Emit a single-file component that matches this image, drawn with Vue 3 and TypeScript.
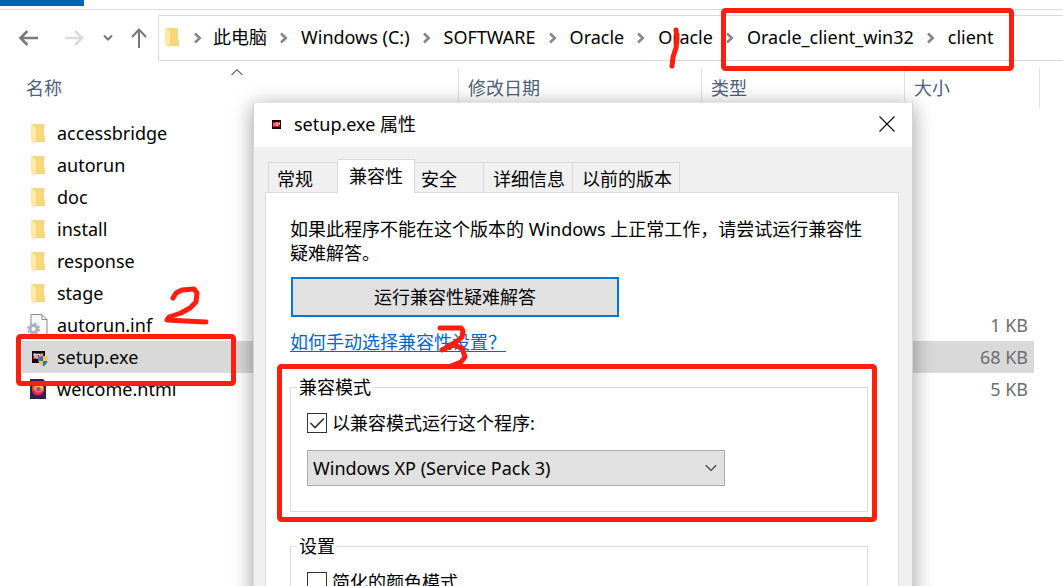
<script setup lang="ts">
import { ref } from 'vue'

type Kind = 'folder' | 'inf' | 'setup' | 'html'
interface FileRow {
  name: string
  kind: Kind
  size?: string
}

const crumbs: string[] = ['此电脑', 'Windows (C:)', 'SOFTWARE', 'Oracle', 'Oracle', 'Oracle_client_win32', 'client']
const files: FileRow[] = [
  { name: 'accessbridge', kind: 'folder' },
  { name: 'autorun', kind: 'folder' },
  { name: 'doc', kind: 'folder' },
  { name: 'install', kind: 'folder' },
  { name: 'response', kind: 'folder' },
  { name: 'stage', kind: 'folder' },
  { name: 'autorun.inf', kind: 'inf', size: '1 KB' },
  { name: 'setup.exe', kind: 'setup', size: '68 KB' },
  { name: 'welcome.html', kind: 'html', size: '5 KB' },
]
const tabs: string[] = ['常规', '兼容性', '安全', '详细信息', '以前的版本']
const selectedFile = ref('setup.exe')
const activeTab = ref('兼容性')
const compatOn = ref(true)
const reducedColor = ref(false)
const mode = ref('Windows XP (Service Pack 3)')
</script>

<template>
  <main class="screen">
    <div class="ribbon"><span class="ribbon-tab"></span></div>

    <nav class="nav">
      <button class="nav-btn back" aria-label="Back">
        <svg width="20" height="20" viewBox="0 0 20 20"><path d="M20 10H2.500M9.500 3l-7 7 7 7" fill="none" stroke="#7a7a7a" stroke-width="2.6" /></svg>
      </button>
      <button class="nav-btn forward" aria-label="Forward">
        <svg width="20" height="20" viewBox="0 0 20 20"><path d="M1 10h17M11 3l7 7-7 7" fill="none" stroke="#dcdcdc" stroke-width="2.6" /></svg>
      </button>
      <button class="nav-btn recent" aria-label="Recent">
        <svg width="10" height="8" viewBox="0 0 10 8"><path d="M1 1.5l4 4 4-4" fill="none" stroke="#777" stroke-width="2" /></svg>
      </button>
      <button class="nav-btn up" aria-label="Up">
        <svg width="18" height="20" viewBox="0 0 18 20"><path d="M9 20V2M2 9l7-7.500 7 7.500" fill="none" stroke="#777" stroke-width="2" /></svg>
      </button>
      <div class="address">
        <svg class="folder" width="14" height="22" viewBox="0 0 14 22">
          <path d="M0 1h13v11l1 1v6H4z" fill="#f6d77a" />
          <path d="M0 1l5 3v13l-1 4-4-3z" fill="#ffe9a6" />
        </svg>
        <template v-for="(c, i) in crumbs" :key="i">
          <svg class="sep" width="8" height="12" viewBox="0 0 8 12"><path d="M1 1.500L5.800 6 1 10.500" fill="none" stroke="#858585" stroke-width="2.500" /></svg>
          <button class="crumb">{{ c }}</button>
        </template>
      </div>
    </nav>

    <table class="files">
      <colgroup><col /><col class="c-date" /><col class="c-type" /><col class="c-size" /></colgroup>
      <thead>
        <tr>
          <th class="first">名称
            <svg class="caret" width="12" height="7" viewBox="0 0 12 7"><path d="M.5 6L6 .8 11.500 6" fill="none" stroke="#666" stroke-width="1.100" /></svg>
          </th>
          <th>修改日期</th>
          <th>类型</th>
          <th>大小</th>
        </tr>
      </thead>
      <tbody>
        <tr v-for="f in files" :key="f.name" :class="{ selected: f.name === selectedFile }" @click="selectedFile = f.name">
          <td>
            <div class="name">
              <span class="icon">
                <svg v-if="f.kind === 'folder'" width="14" height="24" viewBox="0 0 14 24">
                  <path d="M0 3h13v11l1 1v6H4z" fill="#f6d77a" />
                  <path d="M0 3l5 3v13l-1 4-4-3z" fill="#ffe9a6" />
                </svg>
                <svg v-else-if="f.kind === 'inf'" width="22" height="24" viewBox="0 0 22 24">
                  <path d="M4 1.500h11l5 5V23H4z" fill="#f7f7f7" stroke="#8a8a8a" />
                  <path d="M15 1.500v5h5" fill="none" stroke="#8a8a8a" />
                  <circle cx="6.500" cy="16" r="3.500" fill="#fff" stroke="#a3b4c0" stroke-width="3" />
                  <circle cx="6.500" cy="16" r="5.500" fill="none" stroke="#a3b4c0" stroke-width="2" stroke-dasharray="2.400 1.920" />
                </svg>
                <svg v-else-if="f.kind === 'setup'" width="20" height="20" viewBox="0 0 20 20">
                  <path d="M4 4h13v12H4z" fill="#140808" />
                  <path d="M5 6h10v6H5z" fill="#8d2020" />
                  <path d="M5.500 8l1.500-1v4.500M9 7.500h3v3.500H9zM14 6.500v3" fill="none" stroke="#fff" stroke-width="1.200" />
                  <path d="M10 10.500l5-2 5 2c0 4-1.200 7-5 9-3.800-2-5-5-5-9z" fill="#f6c945" />
                  <path d="M10 10.500l5-2V14h-4.500zM15 14h4.500c-.7 2.600-2 4.300-4.500 5.500z" fill="#2b74be" />
                </svg>
                <svg v-else width="18" height="20" viewBox="0 0 18 20">
                  <path d="M1 0h13l3 3v17H1z" fill="#302052" />
                  <circle cx="9" cy="10" r="6" fill="#ff6a2a" />
                  <path d="M4 8c0 6 8 8 11 2 0 8-12 9-12 0z" fill="#ef254e" />
                  <path d="M10 3c4 2 5 6 3 9 0-3-2-4-3-4-3 0-3 4 0 4-4 1-6-4-2-6 2-1 2-2 2-3z" fill="#ffc43a" />
                  <circle cx="9" cy="10" r="2" fill="#8b46d6" />
                </svg>
              </span>
              <span>{{ f.name }}</span>
            </div>
          </td>
          <td></td>
          <td></td>
          <td class="size">{{ f.size }}</td>
        </tr>
      </tbody>
    </table>

    <section class="dialog" role="dialog" aria-labelledby="dlg-title">
      <header class="titlebar">
        <svg width="9" height="9" viewBox="0 0 9 9">
          <path d="M0 0h9v9H0z" fill="#1c0606" />
          <path d="M1 2h7v5H1z" fill="#b42222" />
          <path d="M2 3v3M4 3h2v2.500H4zM7.500 2.500v2" fill="none" stroke="#fff" stroke-width=".8" />
        </svg>
        <h1 id="dlg-title">setup.exe 属性</h1>
        <button class="close" aria-label="Close">
          <svg width="16" height="16" viewBox="0 0 16 16"><path d="M.5 .5l15 15M15.500 .5l-15 15" stroke="#111" stroke-width="1.200" /></svg>
        </button>
      </header>

      <div class="body">
        <div class="tabs" role="tablist">
          <button
            v-for="t in tabs"
            :key="t"
            class="tab"
            role="tab"
            :aria-selected="t === activeTab"
            :class="{ active: t === activeTab, wide: t.length > 3 }"
            @click="activeTab = t"
          >{{ t }}</button>
        </div>

        <div class="panel">
          <p class="intro">如果此程序不能在这个版本的 Windows 上正常工作，请尝试运行兼容性疑难解答。</p>
          <button class="run">运行兼容性疑难解答</button>
          <a class="help" href="#">如何手动选择兼容性设置？</a>

          <fieldset>
            <legend>兼容模式</legend>
            <label class="check" for="compat">
              <span class="box">
                <input id="compat" v-model="compatOn" type="checkbox" />
                <svg v-if="compatOn" width="20" height="20" viewBox="0 0 20 20"><path d="M3.500 10l4.500 4.500L17 5.500" fill="none" stroke="#333" stroke-width="1.700" /></svg>
              </span>
              以兼容模式运行这个程序:
            </label>
            <div class="select">
              <select v-model="mode" aria-label="兼容模式">
                <option>Windows XP (Service Pack 3)</option>
              </select>
              <svg width="12" height="8" viewBox="0 0 12 8"><path d="M.8 1.200L6 6.400l5.200-5.200" fill="none" stroke="#444" stroke-width="1.300" /></svg>
            </div>
          </fieldset>

          <fieldset>
            <legend>设置</legend>
            <label class="check" for="colors">
              <span class="box"><input id="colors" v-model="reducedColor" type="checkbox" /></span>
              简化的颜色模式
            </label>
          </fieldset>
        </div>
      </div>
    </section>

    <svg class="ink" width="1063" height="586" viewBox="0 0 1063 586" fill="none" stroke="#ff1e10" stroke-width="5" stroke-linecap="round" stroke-linejoin="round" aria-hidden="true">
      <rect x="723.500" y="10.500" width="288" height="58" rx="2" />
      <rect x="18.500" y="336.500" width="215" height="47" rx="2" />
      <rect x="279.500" y="366.500" width="595" height="153" rx="2" />
      <path d="M676 30l1 8-1 10-3 9-1 9" />
      <path d="M173 298l3-5 6-3 12-1 3 4-1 9-6 6-9 5-12 4-2 3 18 1 21 1" />
      <path d="M440 328h21l2 3-1 6-6 5-14 8 12-5 8 3 3 9-4 5-10 4" />
    </svg>
  </main>
</template>

<style>
html,
body {
  margin: 0;
  height: 100%;
  overflow: hidden;
}
#app {
  height: 100%;
}
</style>

<style scoped>
.screen {
  position: relative;
  height: 100%;
  overflow: hidden;
  background: #fff;
  color: #000;
  font: 18px/24px "Noto Sans", "Noto Sans CJK SC", sans-serif;
}
button,
select,
input {
  margin: 0;
  padding: 0;
  font: inherit;
  color: inherit;
  background: none;
  border: 0;
  border-radius: 0;
}
svg {
  display: block;
  flex: none;
}
.ribbon {
  height: 9px;
  border-bottom: 1px solid #dadbdc;
}
.ribbon-tab {
  display: block;
  width: 84px;
  height: 6px;
  background: #0063b1;
}
.nav {
  display: flex;
  align-items: center;
  padding: 5px 0 7px 18px;
}
.nav-btn {
  display: flex;
}
.forward {
  margin-left: 26px;
}
.recent {
  margin-left: 19px;
}
.up {
  margin-left: 17px;
}
.address {
  flex: 1;
  display: flex;
  align-items: center;
  height: 44px;
  margin-left: 10px;
  padding-left: 6px;
  border: 1px solid #d9d9d9;
  border-right: 0;
  white-space: nowrap;
}
.crumb {
  padding-bottom: 2px;
}
.sep {
  margin: 0 13px;
}
.folder + .sep {
  margin: 0 11px 0 15px;
}
.files {
  width: calc(100% - 45px);
  margin-left: 22px;
  table-layout: fixed;
  border-spacing: 0;
}
.c-date {
  width: 243px;
}
.c-type {
  width: 203px;
}
.c-size {
  width: 135px;
}
th {
  position: relative;
  height: 40px;
  padding: 0 0 0 9px;
  box-sizing: border-box;
  border-right: 1px solid #e2e2e2;
  color: #4c607a;
  font-weight: 400;
  text-align: left;
}
.first {
  padding-left: 4px;
}
.caret {
  position: absolute;
  top: 1px;
  left: 50%;
  margin-left: -9px;
}
tbody::before {
  content: "";
  display: block;
  height: 9px;
}
td {
  height: 32px;
  padding: 0;
}
.name {
  display: flex;
  align-items: center;
  padding-left: 5px;
}
.icon {
  display: flex;
  justify-content: center;
  width: 22px;
  height: 24px;
  margin-right: 8px;
  align-items: center;
}
.size {
  padding-right: 6px;
  border-right: 6px solid transparent;
  background-clip: padding-box;
  color: #6d6d6d;
  text-align: right;
}
.selected td {
  background-color: #d9d9d9;
}
.dialog {
  position: absolute;
  top: 102px;
  left: 253px;
  width: 658px;
  height: 640px;
  border: 1px solid #d4d4d4;
  border-top-color: #e4e4e4;
  background: #f0f0f0;
  box-shadow: 0 4px 20px rgba(0, 0, 0, 0.4);
}
.titlebar {
  box-sizing: border-box;
  display: flex;
  align-items: center;
  height: 44px;
  padding: 0 17px 2px 18px;
  background: #fff;
}
h1 {
  flex: 1;
  margin: 0 0 0 13px;
  font: inherit;
}
.body {
  padding: 12px 13px 0 11px;
}
.tabs {
  display: flex;
  align-items: flex-end;
  height: 33px;
  padding-left: 3px;
}
.tab {
  box-sizing: border-box;
  width: 69px;
  height: 30px;
  padding: 2px 0 0 6px;
  border: 1px solid #d9d9d9;
  border-width: 1px 1px 0 0;
  text-align: left;
  white-space: nowrap;
}
.tab:first-child {
  width: 70px;
  padding-left: 8px;
  border-left-width: 1px;
}
.tab.wide {
  width: auto;
  padding: 2px 7px 0 9px;
}
.tab.active {
  position: relative;
  width: 77px;
  height: 34px;
  margin-bottom: -1px;
  padding: 0 10px 2px 11px;
  border-left-width: 0;
  background: #fff;
}
.panel {
  box-sizing: border-box;
  height: 600px;
  padding: 24px 30px 0 24px;
  border: 1px solid #dcdcdc;
  background: #fff;
}
.intro {
  margin: 0 0 12px;
}
.run {
  display: block;
  width: 328px;
  height: 40px;
  margin-left: 1px;
  border: 2px solid #0078d7;
  background: #e1e1e1;
}
.help {
  display: inline-block;
  margin-top: 13px;
  color: #0066cc;
  text-decoration: underline;
  text-underline-offset: 2px;
}
fieldset {
  min-width: 0;
  margin: 21px 0 0;
  padding: 14px 16px 25px;
  border: 1px solid #dcdcdc;
}
fieldset + fieldset {
  margin-top: 22px;
}
legend {
  margin-left: -10px;
  padding: 0 2px;
}
.check {
  display: flex;
  align-items: center;
  gap: 5px;
  height: 20px;
}
.box {
  position: relative;
  display: flex;
}
.box input {
  appearance: none;
  box-sizing: border-box;
  width: 20px;
  height: 20px;
  border: 1px solid #333;
  background: #fff;
}
.box svg {
  position: absolute;
  top: 0;
  left: 0;
  pointer-events: none;
}
.select {
  position: relative;
  width: 418px;
  margin-top: 17px;
}
.select select {
  display: block;
  appearance: none;
  box-sizing: border-box;
  width: 100%;
  height: 36px;
  padding-left: 5px;
  border: 1px solid #adadad;
  background: #e1e1e1;
}
.select svg {
  position: absolute;
  top: 14px;
  right: 8px;
  pointer-events: none;
}
.ink {
  position: absolute;
  top: 0;
  left: 0;
  pointer-events: none;
}
</style>
